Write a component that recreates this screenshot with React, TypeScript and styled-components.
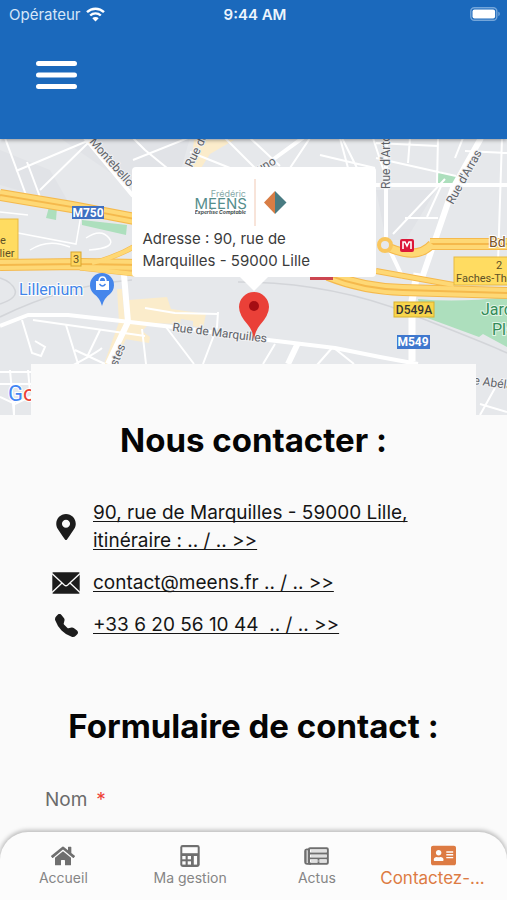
import React from "react";
import styled, { createGlobalStyle } from "styled-components";
import { FaHome, FaAddressCard, FaMapMarkerAlt } from "react-icons/fa";
import { BsTelephoneFill } from "react-icons/bs";

const GlobalStyle = createGlobalStyle`
  * { box-sizing: border-box; }
  body { margin: 0; background: #fafafa; font-family: Inter, "Open Sans", sans-serif; }
`;

const Page = styled.div`
  display: flex;
  flex-direction: column;
  height: 100vh;
  background: #fafafa;
  overflow: hidden;
`;

const Header = styled.header`
  position: relative;
  z-index: 2;
  flex: none;
  padding-bottom: 45px;
  background: #1b69bc;
  box-shadow: 0 1px 4px rgba(0, 0, 0, 0.4);
`;

const StatusBar = styled.div`
  display: grid;
  grid-template-columns: 1fr auto 1fr;
  align-items: center;
  height: 28px;
  padding: 0 6px 0 9px;
  color: #fff;
  font-size: 15px;
`;

const Carrier = styled.span`
  display: flex;
  align-items: center;
  gap: 5px;
  color: #d6e6f8;
`;

const Clock = styled.time`
  font-weight: 600;
  color: #eef5fd;
`;

const BatterySlot = styled.span`
  display: flex;
  justify-content: flex-end;
`;

const MenuButton = styled.button`
  display: block;
  margin: 28px 0 0 32px;
  padding: 4px;
  border: 0;
  background: none;
  svg { display: block; }
`;

const Scroller = styled.main`
  flex: 1;
  min-height: 0;
  overflow-y: auto;
  scrollbar-width: none;
  &::-webkit-scrollbar { display: none; }
`;

const MapArea = styled.section`
  position: relative;
  height: 276px;
  overflow: hidden;
`;

const MapSvg = styled.svg`
  display: block;
  width: 100%;
  height: 100%;
  font-family: Roboto, sans-serif;
`;

const Bubble = styled.div`
  position: absolute;
  top: 28px;
  left: 50%;
  width: 244px;
  padding: 11px 11px 5px;
  transform: translateX(-50%);
  border-radius: 4px;
  background: #fff;
  &::after {
    content: "";
    position: absolute;
    top: 100%;
    left: 50%;
    margin-left: -14px;
    border: 14px solid transparent;
    border-top-color: #fff;
    border-bottom: 0;
  }
`;

const LogoSvg = styled.svg`
  display: block;
  margin: 0 auto 2px;
`;

const BubbleText = styled.p`
  margin: 0;
  color: #3b3b3b;
  font-size: 15px;
  line-height: 22px;
`;

const Panel = styled.section`
  position: relative;
  margin: -51px 31px 0;
  padding: 52px 14px 0;
  background: #fafafa;
`;

const Title = styled.h2`
  margin: 0;
  color: #050505;
  font-size: 33px;
  font-weight: 700;
  line-height: 48px;
  text-align: center;
  white-space: nowrap;
`;

const ContactList = styled.ul`
  display: grid;
  gap: 14px;
  margin: 35px 0 63px;
  padding: 0;
  list-style: none;
`;

const ContactItem = styled.li`
  display: grid;
  grid-template-columns: 42px 1fr;
  align-items: center;
  gap: 6px;
  font-size: 19px;
  line-height: 28px;
`;

const IconSlot = styled.span`
  display: flex;
  justify-content: center;
  color: #1c1c1c;
`;

const ContactLink = styled.a`
  color: #151515;
  text-decoration: underline;
  text-decoration-thickness: 1px;
  text-underline-offset: 2px;
  text-decoration-skip-ink: none;
  white-space: pre-wrap;
`;

const FieldLabel = styled.label`
  display: block;
  margin-top: 36px;
  color: #6b6b6b;
  font-size: 19px;
  line-height: 28px;
`;

const Required = styled.span`
  margin-left: 9px;
  color: #ee4036;
`;

const TextInput = styled.input`
  display: block;
  width: 100%;
  height: 48px;
  margin: 28px 0 32px;
  padding: 0 12px;
  border: 1px solid #ccc;
  border-radius: 4px;
  background: #fff;
  font: inherit;
`;

const TabBar = styled.nav`
  position: relative;
  z-index: 2;
  flex: none;
  display: grid;
  grid-template-columns: repeat(4, minmax(0, 1fr));
  height: 68px;
  padding-top: 12px;
  border-radius: 28px 28px 0 0;
  background: #fcfcfc;
  box-shadow: 0 -1px 4px 1px rgba(0, 0, 0, 0.25);
`;

const Tab = styled.a<{ $active?: boolean }>`
  display: flex;
  flex-direction: column;
  align-items: center;
  color: ${(p) => (p.$active ? "#dd7b43" : "#6f6f6f")};
  font-size: ${(p) => (p.$active ? 17 : 14)}px;
  line-height: 22px;
  text-decoration: none;
`;

const TabIcon = styled.span`
  display: flex;
  align-items: center;
  height: 23px;
`;

const TabLabel = styled.span<{ $active?: boolean }>`
  align-self: ${(p) => (p.$active ? "flex-start" : "center")};
  color: ${(p) => (p.$active ? "#dd7b43" : "#858585")};
  white-space: nowrap;
`;

function WifiIcon() {
  return (
    <svg width="19" height="15" viewBox="0 0 19 15" fill="none" stroke="#fff" strokeWidth="2.4" aria-hidden="true">
      <path d="M1 5.2a12.2 12.2 0 0 1 17 0" />
      <path d="M4.2 8.5a7.6 7.6 0 0 1 10.6 0" />
      <path d="M9.5 14.4 6.3 11.2a4.6 4.6 0 0 1 6.4 0z" fill="#fff" stroke="none" />
    </svg>
  );
}

function BatteryIcon() {
  return (
    <svg width="31" height="14" viewBox="0 0 31 14" aria-hidden="true">
      <rect x="0.8" y="0.8" width="26" height="12.4" rx="3.5" fill="none" stroke="#74a6da" strokeWidth="1.4" />
      <rect x="2.5" y="2.5" width="22.6" height="9" rx="2" fill="#fff" />
      <path d="M28.3 4.8c2 .5 2 3.9 0 4.4z" fill="#74a6da" />
    </svg>
  );
}

function MailIcon() {
  return (
    <svg width="28" height="22" viewBox="0 0 28 22" aria-hidden="true">
      <rect x="0.3" y="0.3" width="27.4" height="21.4" rx="1" fill="#1c1c1c" />
      <path d="M0 1.5 12.3 13q1.7 1.5 3.4 0L28 1.5M0 20.5 10 11M28 20.5 18 11" fill="none" stroke="#fafafa" strokeWidth="1.3" />
    </svg>
  );
}

function CalculatorIcon() {
  return (
    <svg width="20" height="22" viewBox="0 0 20 22" aria-hidden="true">
      <rect x="0.3" y="0" width="19.4" height="22" rx="2.4" fill="currentColor" />
      <g fill="#fcfcfc">
        <rect x="2.3" y="2.2" width="15.4" height="6" />
        <rect x="2.3" y="11" width="3.3" height="3.3" />
        <rect x="7.7" y="11" width="3.3" height="3.3" />
        <rect x="2.3" y="16.3" width="3.3" height="3.3" />
        <rect x="7.7" y="16.3" width="3.3" height="3.3" />
        <rect x="13.8" y="11" width="3.3" height="8.6" />
      </g>
    </svg>
  );
}

function NewsIcon() {
  return (
    <svg width="25" height="22" viewBox="0 0 25 22" fill="none" stroke="currentColor" aria-hidden="true">
      <rect x="5" y="3.3" width="18.8" height="15.4" rx="1" strokeWidth="2" />
      <path d="M5 4.500H2.600Q1.200 4.500 1.200 6v10.500q0 2.200 2 2.200H7" strokeWidth="2" />
      <path d="M2.800 6v11" stroke="#9b9b9b" strokeWidth="1.400" />
      <path d="M5 8.500h19M5 13.300h19M14.500 13v5" strokeWidth="1.800" />
      <path d="M7 6h15M7 11h15M7 16h15" stroke="#c4c4c4" strokeWidth="1" />
    </svg>
  );
}

function Logo() {
  return (
    <LogoSvg width="118" height="48" viewBox="0 0 118 48" role="img" aria-label="Frédéric Meens Expertise Comptable">
      <g fontFamily="Inter, sans-serif" textAnchor="end">
        <text x="51" y="19" fontSize="9" fill="#88aaa9">Frédéric</text>
        <text x="52" y="31" fontSize="15" fill="#558e8d">MEENS</text>
        <text x="51" y="36" fontSize="5" fontStyle="italic" fontWeight="700" fill="#3f4c4c">Expertise Comptable</text>
      </g>
      <path d="M60 1v47" stroke="#f1c9b4" />
      <path d="M80 13v23L69 24.500z" fill="#d87d45" />
      <path d="M80 13v23l11.500-11.500z" fill="#497b82" />
    </LogoSvg>
  );
}

function CityMap() {
  return (
    <MapSvg viewBox="0 139 507 276" preserveAspectRatio="xMidYMid slice" role="img" aria-label="Plan du quartier">
      <rect x="-600" y="138" width="1700" height="277" fill="#e6e8eb" />
      <path d="M60 138 118 178 175 190 190 138zM0 150l50 20 20 35-70-20zM376 190h60l-30 50h-20z" fill="#e1e3e7" />
      {/* parks and commercial blocks */}
      <g fill="#addfbd">
        <path d="M49 207h8l-1 13-10-2zM82 220l45 5-1 10-44-10zM438 171l18 5v7h-19z" />
        <path d="M418 299q40 4 89-2v50l-24-13-4 3-57-21z" />
      </g>
      <path d="M117 289h5l3 33 5 8-15 34h-11l15-42zM129 300l38-3 4 12 35 5-3 14-10-2v-5l-12-2-1 5-30-1-8 8 8 6-1 6-30-5zM194 140h40l-24 14-14 22-6-4z" fill="#fbeccb" />
      {/* railway */}
      <g fill="none" stroke="#d3d5d9" strokeWidth="1.600">
        <path d="M0 317q65-32 132-37M238 282q90 0 170 31t99 40M0 278q12 4 15 12t-15 14" />
      </g>
      {/* local streets */}
      <g fill="none" stroke="#fff" strokeWidth="2">
        <path d="M5 138 26 195M16 171l76-32M27 162l13 35M40 190l48-47" />
        <path d="M133 138l12 12M133 160l55-22M145 150l22 18M225 138l30 30M250 138l30 28M190 152l40 16M310 138l-20 30M320 155l55 13M342 138l15 30" />
        <path d="M18 233l58 11 5-29M0 212l28 3M30 250q18-12 40-3M86 238q15-10 23 0t-20 12" strokeWidth="1.500" />
        <path d="M376 158l80 18M373 138l13 40M410 138l-2 25M438 138l-1 45M463 138l-8 20M376 143l62 3M465 151l42 2M502 138l-4 125M393 234l52-55M405 218h33M427 217l15-33M340 138l8 30" />
        <path d="M22 320l10 33 9 3 4-9-10-6M66 325l13 42M100 330l-12 25M0 372h60q35-18 42-24M142 329l4 35M166 327l28 37M218 312l-1 15-14 37M145 308l30 5 43 1M33 320l112 16M75 350l30 14M10 370l4 45M28 370l2 22M0 384h35M0 397l15 7 17-8M14 415v-14M275 344l-12 20M332 348l-15 17M334 348l20 16M495 388l-15 27M480 404l27 8" />
      </g>
      <g fill="none" stroke="#fff" strokeWidth="4" strokeLinejoin="round">
        <path d="M85 138l48 58M260 169l44-32M376 185h131M386 138v104l17 36M0 326l28-11 40 0 62 7 60 7 70 10 75 9 45 9 38 7" />
        <path d="M124 275l4 47-20 42M481 138l-28 50-31 90M298 343l-10 21" strokeWidth="6" />
        <path d="M417 273l-5 28v60" strokeWidth="7" />
      </g>
      {/* motorways: a dark casing under light lanes */}
      <g fill="none" stroke="#f5b94c" strokeWidth="12">
        <path d="M0 195 72 207 140 220" />
        <path d="M0 265 80 264 140 265" />
        <path d="M92 263q25-6 45-18M80 268l55 6" strokeWidth="5" />
        <path d="M328 275q35 14 75 15t104 3" />
        <path d="M376 271l78 14" strokeWidth="6" />
        <path d="M430 244h77" />
        <path d="M390 248q28 12 42-4" strokeWidth="9" />
      </g>
      <g fill="none" stroke="#fed875" strokeWidth="4">
        <path d="M0 192 72 204 140 217M0 198 72 210 140 223M0 262l80-1 60 1M0 268l80-1 60 1" />
        <path d="M92 263q25-6 45-18M80 268l55 6M376 271l78 14" />
        <path d="M328 272q35 14 75 15t104 3M328 278q35 14 75 15t104 3M430 241h77M430 247h77" />
        <path d="M390 248q28 12 42-4" strokeWidth="7" />
      </g>
      <circle cx="385" cy="245" r="6" fill="#e6e8eb" stroke="#f9c65d" strokeWidth="4" />
      <path d="M310 278h23" stroke="#cc4650" strokeWidth="4" />

      {/* street names */}
      <g fill="#5f6368" fontSize="12" stroke="#f1f2f4" strokeWidth="2" paintOrder="stroke">
        <text transform="translate(89 142) rotate(49)">Montebello</text>
        <text transform="translate(192 168) rotate(-64)">Rue de</text>
        <text transform="translate(259 173) rotate(-28)">uno</text>
        <text transform="translate(390 189) rotate(-90)">Rue d'Artois</text>
        <text transform="translate(453 205) rotate(-61)">Rue d'Arras</text>
        <text transform="translate(172 331) rotate(7)">Rue de Marquilles</text>
        <text transform="translate(117 367) rotate(-68)">stes</text>
        <text transform="translate(473 384) rotate(8)">e Abélard</text>
      </g>

      {/* road shields and exits */}
      <g textAnchor="middle" fontSize="11">
        <rect x="-20" y="219" width="38" height="40" fill="#ffdc61" stroke="#e7b943" />
        <text x="3" y="244" fill="#5d5027">e</text>
        <text x="4" y="257" fill="#5d5027">alier</text>
        <rect x="71" y="252" width="10" height="14" fill="#fed660" stroke="#d8a52e" />
        <text x="76" y="263" fill="#5d5027">3</text>
        <rect x="72" y="206" width="32" height="13" fill="#3f70c2" />
        <text x="88" y="217" fill="#fff" fontWeight="700" fontSize="12">M750</text>
        <rect x="454" y="257" width="90" height="28" fill="#ffdc61" stroke="#e7b943" />
        <text x="499" y="269" fill="#5d5027">2</text>
        <text x="456" y="282" fill="#5d5027" textAnchor="start">Faches-Thumesnil</text>
        <rect x="394" y="302" width="40" height="15" fill="#f8d54c" stroke="#d8b130" />
        <text x="414" y="314" fill="#333" fontWeight="500" fontSize="12">D549A</text>
        <rect x="397" y="335" width="33" height="14" fill="#3f78ce" />
        <text x="413" y="346" fill="#fff" fontWeight="700" fontSize="12">M549</text>
      </g>
      <rect x="400" y="239" width="14" height="13" rx="2" fill="#dc1739" />
      <path d="M403 249v-7h2l2 4 2-4h2v7" fill="none" stroke="#fff" strokeWidth="1.600" />
      <text x="489" y="247" fontSize="14" fill="#7a5527" stroke="#fff" strokeWidth="2" paintOrder="stroke">Bd</text>
      <g fontSize="16" fill="#328b58" stroke="#e4f6e9" strokeWidth="2" paintOrder="stroke">
        <text x="481" y="315">Jardin des</text>
        <text x="492" y="335">Plantes</text>
      </g>

      {/* shopping centre */}
      <text x="19" y="295" fontSize="16" fill="#4285e8" stroke="#fff" strokeWidth="2" paintOrder="stroke">Lillenium</text>
      <path d="M102 306q-2-8-8-12a12 12 0 1 1 16 0q-6 4-8 12z" fill="#4586eb" />
      <path d="M96 281h13v9H96z" fill="#fff" />
      <path d="M99 282q0-5 3.500-5t3.500 5" fill="none" stroke="#fff" strokeWidth="1.500" />
      <path d="M99.500 284q3 4 6 0" fill="none" stroke="#4586eb" strokeWidth="1.300" />

      {/* office marker */}
      <path d="M254 340q-1-9-6-15-9-10-9-18a15 15 0 0 1 30 0q0 8-9 18-5 6-6 15z" fill="#ea4038" />
      <circle cx="254" cy="306" r="5" fill="#a50d13" />
      <text x="8" y="401" fontSize="22" fill="#4285f4" stroke="#fff" strokeWidth="2" paintOrder="stroke">
        G<tspan fill="#ea4335">o</tspan>
      </text>
    </MapSvg>
  );
}

export default function App() {
  return (
    <Page>
      <GlobalStyle />
      <Header>
        <StatusBar>
          <Carrier>Opérateur <WifiIcon /></Carrier>
          <Clock>9:44 AM</Clock>
          <BatterySlot><BatteryIcon /></BatterySlot>
        </StatusBar>
        <MenuButton type="button" aria-label="Ouvrir le menu">
          <svg width="41" height="30" viewBox="0 0 41 30" stroke="#fff" strokeWidth="5" strokeLinecap="round" aria-hidden="true">
            <path d="M2.500 3.500h36M2.500 15h36M2.500 26.500h36" />
          </svg>
        </MenuButton>
      </Header>
      <Scroller>
        <MapArea>
          <CityMap />
          <Bubble>
            <Logo />
            <BubbleText>Adresse : 90, rue de<br />Marquilles - 59000 Lille</BubbleText>
          </Bubble>
        </MapArea>
        <Panel>
          <Title>Nous contacter :</Title>
          <ContactList>
            <ContactItem>
              <IconSlot><FaMapMarkerAlt size={26} /></IconSlot>
              <span><ContactLink href="#itineraire">90, rue de Marquilles - 59000 Lille,<br />itinéraire : .. / .. &gt;&gt;</ContactLink></span>
            </ContactItem>
            <ContactItem>
              <IconSlot><MailIcon /></IconSlot>
              <span><ContactLink href="mailto:contact@meens.fr">contact@meens.fr .. / .. &gt;&gt;</ContactLink></span>
            </ContactItem>
            <ContactItem>
              <IconSlot><BsTelephoneFill size={23} /></IconSlot>
              <span><ContactLink href="tel:+33620561044">{"+33 6 20 56 10 44  .. / .. >>"}</ContactLink></span>
            </ContactItem>
          </ContactList>
          <Title>Formulaire de contact :</Title>
          <form>
            <FieldLabel htmlFor="nom">Nom<Required>*</Required></FieldLabel>
            <TextInput id="nom" name="nom" type="text" required />
          </form>
        </Panel>
      </Scroller>
      <TabBar>
        <Tab href="#accueil"><TabIcon><FaHome size={24} /></TabIcon><TabLabel>Accueil</TabLabel></Tab>
        <Tab href="#gestion"><TabIcon><CalculatorIcon /></TabIcon><TabLabel>Ma gestion</TabLabel></Tab>
        <Tab href="#actus"><TabIcon><NewsIcon /></TabIcon><TabLabel>Actus</TabLabel></Tab>
        <Tab href="#contact" $active aria-current="page"><TabIcon><FaAddressCard size={25} /></TabIcon><TabLabel $active>Contactez-...</TabLabel></Tab>
      </TabBar>
    </Page>
  );
}
